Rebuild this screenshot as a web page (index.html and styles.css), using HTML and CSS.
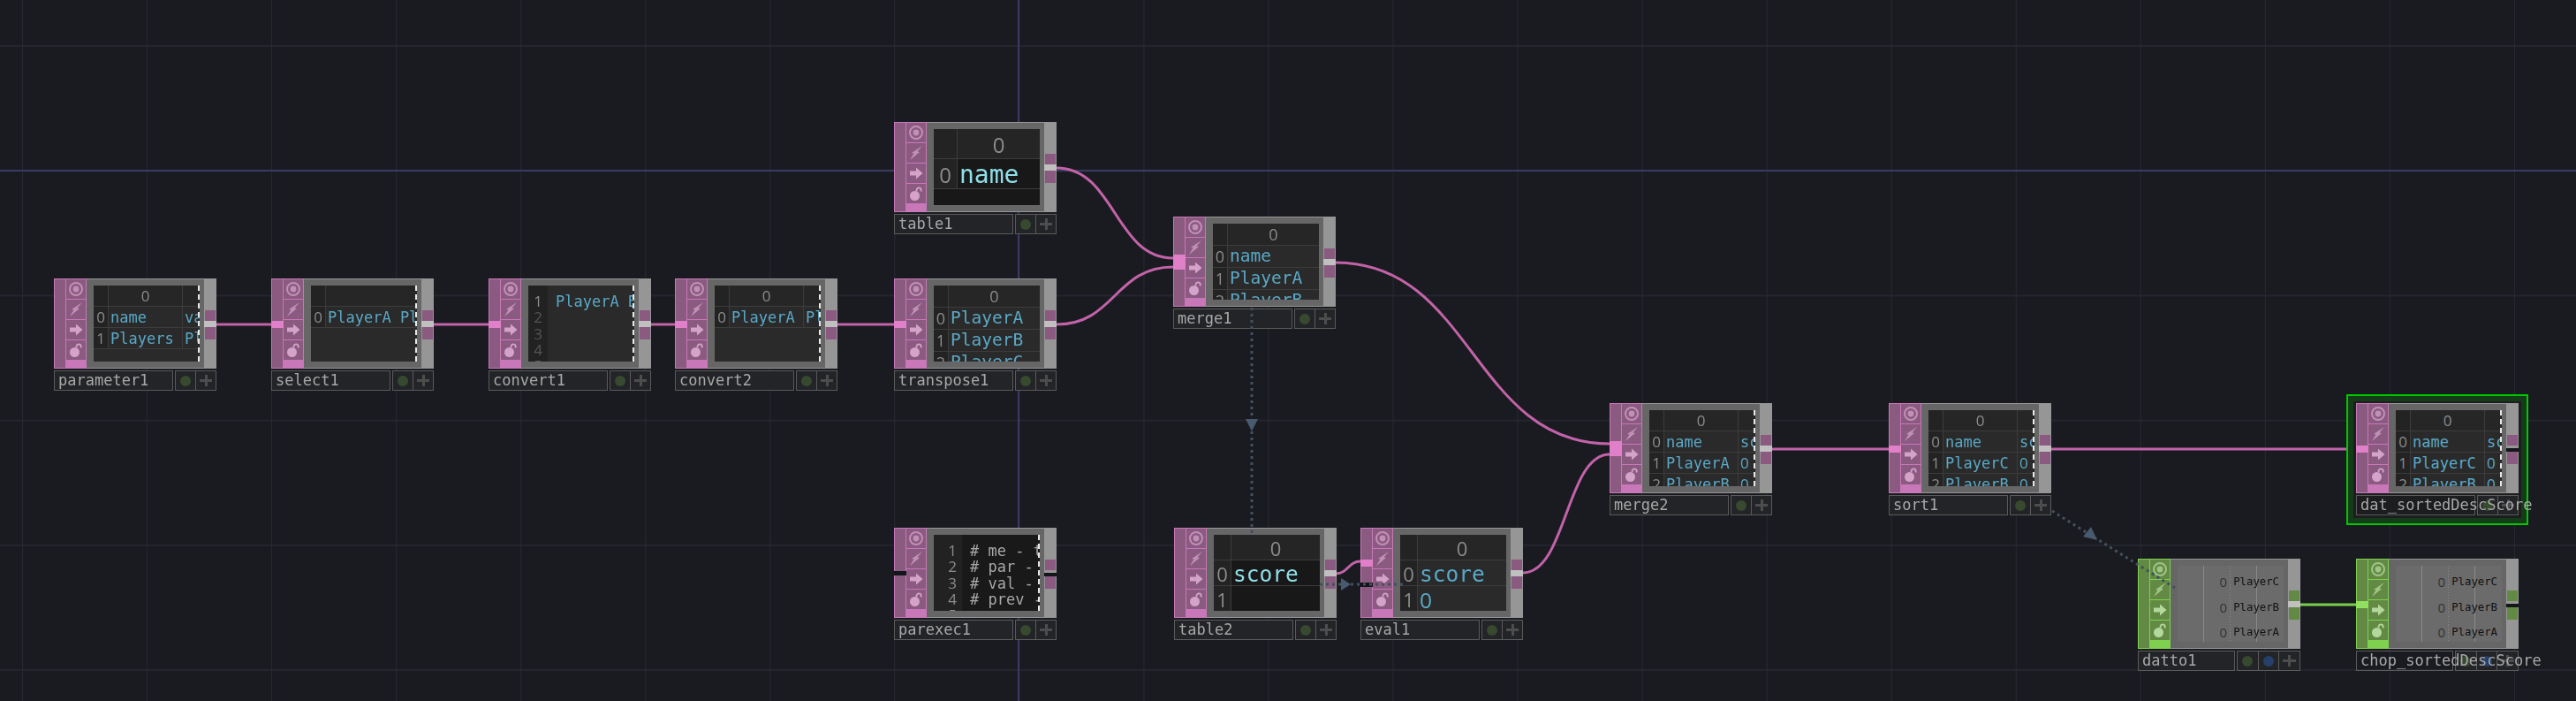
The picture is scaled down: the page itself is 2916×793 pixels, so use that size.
FILE: index.html
```html
<!DOCTYPE html>
<html lang="en">
<head>
<meta charset="UTF-8">
<meta name="viewport" content="width=device-width, initial-scale=1.0">
<link rel="stylesheet" href="styles.css">
<title>Network editor</title>
</head>

<body>

<svg class="defs" width="0" height="0">
  <symbol id="i-view" viewBox="0 0 16 16">
    <path fill-rule="evenodd" opacity="0.75" d="M8 0a8 8 0 1 1 0 16A8 8 0 0 1 8 0zm0 2a6 6 0 1 0 0 12A6 6 0 0 0 8 2z"/>
    <circle cx="8" cy="8" r="3.4" opacity="0.75"/>
  </symbol>
  <symbol id="i-bolt" viewBox="0 0 16 16">
    <path opacity="0.75" d="M15 0 9.5 6.5l2.5.5L1 16l4.500-7.500L3 8z"/>
  </symbol>
  <symbol id="i-arrow" viewBox="0 0 16 16">
    <path d="M8 1.5 15.5 8 8 14.500V10.500H1v-5h7z"/>
  </symbol>
  <symbol id="i-lock" viewBox="0 0 16 16">
    <circle cx="6.500" cy="10.500" r="5.500"/>
    <path fill="none" stroke="currentColor" stroke-width="1.800" d="M8.500 5.500V4a2.600 2.600 0 0 1 5.200 0v1.500"/>
  </symbol>
</svg>

<main class="canvas">

  <div class="axis axis-h"></div>
  <div class="axis axis-v"></div>

  <!-- wires go under the nodes -->
  <svg class="wires" width="2916" height="793">
    <g class="wire">
      <path d="M245 367H307"/>
      <path d="M491 367H553"/>
      <path d="M737 367H764"/>
      <path d="M948 367H1012"/>
      <path d="M1196 190C1262 190 1262 292 1328 292"/>
      <path d="M1196 367C1262 367 1262 302 1328 302"/>
      <path d="M1512 297C1667 297 1667 502 1822 502"/>
      <path d="M1724 648C1773 648 1773 514 1822 514"/>
      <path d="M1512 649C1526 649 1526 635 1540 635"/>
      <path d="M2006 508H2138"/>
      <path d="M2322 508H2667"/>
    </g>
    <g class="wire wire-chop">
      <path d="M2604 684H2667"/>
    </g>
  </svg>

  <div class="select-box"></div>

  <div class="node n-parameter1">
    <div class="op">
      <div class="inputs"></div>
      <div class="flags">
        <span class="flag"><svg><use href="#i-view"/></svg></span>
        <span class="flag"><svg><use href="#i-bolt"/></svg></span>
        <span class="flag"><svg><use href="#i-arrow"/></svg></span>
        <span class="flag"><svg><use href="#i-lock"/></svg></span>
      </div>
      <div class="body">
        <div class="viewer cut">
          <div class="tbl cols-3">
            <span class="idx"></span><span class="head">0</span><span class="head"></span>
            <span class="idx">0</span><span>name</span><span>value</span>
            <span class="idx">1</span><span>Players</span><span>PlayerA</span>
          </div>
        </div>
      </div>
      <div class="outs"><i></i><i></i></div>
    </div>
    <div class="foot"><span class="name">parameter1</span><span class="btns"><i class="dot"></i><i class="plus"></i></span></div>
  </div>

  <div class="node n-select1">
    <div class="op">
      <div class="inputs"><span class="in"></span></div>
      <div class="flags">
        <span class="flag"><svg><use href="#i-view"/></svg></span>
        <span class="flag"><svg><use href="#i-bolt"/></svg></span>
        <span class="flag"><svg><use href="#i-arrow"/></svg></span>
        <span class="flag"><svg><use href="#i-lock"/></svg></span>
      </div>
      <div class="body">
        <div class="viewer cut">
          <div class="tbl cols-2">
            <span class="idx"></span><span class="head"></span>
            <span class="idx">0</span><span>PlayerA PlayerB</span>
          </div>
        </div>
      </div>
      <div class="outs"><i></i><i></i></div>
    </div>
    <div class="foot"><span class="name">select1</span><span class="btns"><i class="dot"></i><i class="plus"></i></span></div>
  </div>

  <div class="node n-convert1">
    <div class="op">
      <div class="inputs"><span class="in"></span></div>
      <div class="flags">
        <span class="flag"><svg><use href="#i-view"/></svg></span>
        <span class="flag"><svg><use href="#i-bolt"/></svg></span>
        <span class="flag"><svg><use href="#i-arrow"/></svg></span>
        <span class="flag"><svg><use href="#i-lock"/></svg></span>
      </div>
      <div class="body">
        <div class="viewer cut">
          <div class="code">
            <div class="gutter gutter-thin"><span>1</span><span class="off">2</span><span class="off">3</span><span class="off">4</span><span class="off">5</span></div>
            <div class="lines blue"><span>PlayerA B</span></div>
          </div>
        </div>
      </div>
      <div class="outs"><i></i><i></i></div>
    </div>
    <div class="foot"><span class="name">convert1</span><span class="btns"><i class="dot"></i><i class="plus"></i></span></div>
  </div>

  <div class="node n-convert2">
    <div class="op">
      <div class="inputs"><span class="in"></span></div>
      <div class="flags">
        <span class="flag"><svg><use href="#i-view"/></svg></span>
        <span class="flag"><svg><use href="#i-bolt"/></svg></span>
        <span class="flag"><svg><use href="#i-arrow"/></svg></span>
        <span class="flag"><svg><use href="#i-lock"/></svg></span>
      </div>
      <div class="body">
        <div class="viewer cut">
          <div class="tbl cols-3">
            <span class="idx"></span><span class="head">0</span><span class="head"></span>
            <span class="idx">0</span><span>PlayerA</span><span>PlayerB</span>
          </div>
        </div>
      </div>
      <div class="outs"><i></i><i></i></div>
    </div>
    <div class="foot"><span class="name">convert2</span><span class="btns"><i class="dot"></i><i class="plus"></i></span></div>
  </div>

  <div class="node n-transpose1">
    <div class="op">
      <div class="inputs"><span class="in"></span></div>
      <div class="flags">
        <span class="flag"><svg><use href="#i-view"/></svg></span>
        <span class="flag"><svg><use href="#i-bolt"/></svg></span>
        <span class="flag"><svg><use href="#i-arrow"/></svg></span>
        <span class="flag"><svg><use href="#i-lock"/></svg></span>
      </div>
      <div class="body">
        <div class="viewer">
          <div class="tbl cols-2 tbl-mid">
            <span class="idx"></span><span class="head">0</span>
            <span class="idx">0</span><span>PlayerA</span>
            <span class="idx">1</span><span>PlayerB</span>
            <span class="idx">2</span><span>PlayerC</span>
          </div>
        </div>
      </div>
      <div class="outs"><i></i><i></i></div>
    </div>
    <div class="foot"><span class="name">transpose1</span><span class="btns"><i class="dot"></i><i class="plus"></i></span></div>
  </div>

  <div class="node n-table1">
    <div class="op">
      <div class="inputs"></div>
      <div class="flags">
        <span class="flag"><svg><use href="#i-view"/></svg></span>
        <span class="flag"><svg><use href="#i-bolt"/></svg></span>
        <span class="flag"><svg><use href="#i-arrow"/></svg></span>
        <span class="flag"><svg><use href="#i-lock"/></svg></span>
      </div>
      <div class="body">
        <div class="viewer viewer-edit">
          <div class="tbl cols-big tbl-edit">
            <span class="idx"></span><span class="head">0</span>
            <span class="idx">0</span><span>name</span>
          </div>
        </div>
      </div>
      <div class="outs"><i></i><i></i></div>
    </div>
    <div class="foot"><span class="name">table1</span><span class="btns"><i class="dot"></i><i class="plus"></i></span></div>
  </div>

  <div class="node n-merge1">
    <div class="op">
      <div class="inputs"><span class="in in-multi"></span></div>
      <div class="flags">
        <span class="flag"><svg><use href="#i-view"/></svg></span>
        <span class="flag"><svg><use href="#i-bolt"/></svg></span>
        <span class="flag"><svg><use href="#i-arrow"/></svg></span>
        <span class="flag"><svg><use href="#i-lock"/></svg></span>
      </div>
      <div class="body">
        <div class="viewer">
          <div class="tbl cols-2 tbl-mid">
            <span class="idx"></span><span class="head">0</span>
            <span class="idx">0</span><span>name</span>
            <span class="idx">1</span><span>PlayerA</span>
            <span class="idx">2</span><span>PlayerB</span>
          </div>
        </div>
      </div>
      <div class="outs"><i></i><i></i></div>
    </div>
    <div class="foot"><span class="name">merge1</span><span class="btns"><i class="dot"></i><i class="plus"></i></span></div>
  </div>

  <div class="node n-parexec1">
    <div class="op">
      <div class="inputs"><span class="in-gap"></span></div>
      <div class="flags">
        <span class="flag"><svg><use href="#i-view"/></svg></span>
        <span class="flag"><svg><use href="#i-bolt"/></svg></span>
        <span class="flag"><svg><use href="#i-arrow"/></svg></span>
        <span class="flag"><svg><use href="#i-lock"/></svg></span>
      </div>
      <div class="body">
        <div class="viewer viewer-black cut">
          <div class="code">
            <div class="gutter"><span>1</span><span>2</span><span>3</span><span>4</span><span>5</span></div>
            <div class="lines"><span># me - this DAT</span><span># par - the Par</span><span># val - the new</span><span># prev - the pr</span></div>
          </div>
        </div>
      </div>
      <div class="outs outs-notch"><i></i><i></i></div>
    </div>
    <div class="foot"><span class="name">parexec1</span><span class="btns"><i class="dot"></i><i class="plus"></i></span></div>
  </div>

  <div class="node n-table2">
    <div class="op">
      <div class="inputs"></div>
      <div class="flags">
        <span class="flag"><svg><use href="#i-view"/></svg></span>
        <span class="flag"><svg><use href="#i-bolt"/></svg></span>
        <span class="flag"><svg><use href="#i-arrow"/></svg></span>
        <span class="flag"><svg><use href="#i-lock"/></svg></span>
      </div>
      <div class="body">
        <div class="viewer viewer-edit">
          <div class="tbl cols-score tbl-score tbl-edit">
            <span class="idx"></span><span class="head">0</span>
            <span class="idx">0</span><span>score</span>
            <span class="idx">1</span><span></span>
          </div>
        </div>
      </div>
      <div class="outs"><i></i><i></i></div>
    </div>
    <div class="foot"><span class="name">table2</span><span class="btns"><i class="dot"></i><i class="plus"></i></span></div>
  </div>

  <div class="node n-eval1">
    <div class="op">
      <div class="inputs"><span class="in in-top"></span><span class="in-gap in-gap-low"></span></div>
      <div class="flags">
        <span class="flag"><svg><use href="#i-view"/></svg></span>
        <span class="flag"><svg><use href="#i-bolt"/></svg></span>
        <span class="flag"><svg><use href="#i-arrow"/></svg></span>
        <span class="flag"><svg><use href="#i-lock"/></svg></span>
      </div>
      <div class="body">
        <div class="viewer">
          <div class="tbl cols-score tbl-score">
            <span class="idx"></span><span class="head">0</span>
            <span class="idx">0</span><span>score</span>
            <span class="idx">1</span><span class="num">0</span>
          </div>
        </div>
      </div>
      <div class="outs"><i></i><i></i></div>
    </div>
    <div class="foot"><span class="name">eval1</span><span class="btns"><i class="dot"></i><i class="plus"></i></span></div>
  </div>

  <div class="node n-merge2">
    <div class="op">
      <div class="inputs"><span class="in in-multi"></span></div>
      <div class="flags">
        <span class="flag"><svg><use href="#i-view"/></svg></span>
        <span class="flag"><svg><use href="#i-bolt"/></svg></span>
        <span class="flag"><svg><use href="#i-arrow"/></svg></span>
        <span class="flag"><svg><use href="#i-lock"/></svg></span>
      </div>
      <div class="body">
        <div class="viewer cut">
          <div class="tbl cols-3">
            <span class="idx"></span><span class="head">0</span><span class="head"></span>
            <span class="idx">0</span><span>name</span><span>score</span>
            <span class="idx">1</span><span>PlayerA</span><span class="num">0</span>
            <span class="idx">2</span><span>PlayerB</span><span class="num">0</span>
          </div>
        </div>
      </div>
      <div class="outs"><i></i><i></i></div>
    </div>
    <div class="foot"><span class="name">merge2</span><span class="btns"><i class="dot"></i><i class="plus"></i></span></div>
  </div>

  <div class="node n-sort1">
    <div class="op">
      <div class="inputs"><span class="in"></span></div>
      <div class="flags">
        <span class="flag"><svg><use href="#i-view"/></svg></span>
        <span class="flag"><svg><use href="#i-bolt"/></svg></span>
        <span class="flag"><svg><use href="#i-arrow"/></svg></span>
        <span class="flag"><svg><use href="#i-lock"/></svg></span>
      </div>
      <div class="body">
        <div class="viewer cut">
          <div class="tbl cols-3">
            <span class="idx"></span><span class="head">0</span><span class="head"></span>
            <span class="idx">0</span><span>name</span><span>score</span>
            <span class="idx">1</span><span>PlayerC</span><span class="num">0</span>
            <span class="idx">2</span><span>PlayerB</span><span class="num">0</span>
          </div>
        </div>
      </div>
      <div class="outs"><i></i><i></i></div>
    </div>
    <div class="foot"><span class="name">sort1</span><span class="btns"><i class="dot"></i><i class="plus"></i></span></div>
  </div>

  <div class="node n-dat-sorted">
    <div class="op">
      <div class="inputs"><span class="in"></span></div>
      <div class="flags">
        <span class="flag"><svg><use href="#i-view"/></svg></span>
        <span class="flag"><svg><use href="#i-bolt"/></svg></span>
        <span class="flag"><svg><use href="#i-arrow"/></svg></span>
        <span class="flag"><svg><use href="#i-lock"/></svg></span>
      </div>
      <div class="body">
        <div class="viewer cut">
          <div class="tbl cols-3">
            <span class="idx"></span><span class="head">0</span><span class="head"></span>
            <span class="idx">0</span><span>name</span><span>score</span>
            <span class="idx">1</span><span>PlayerC</span><span class="num">0</span>
            <span class="idx">2</span><span>PlayerB</span><span class="num">0</span>
          </div>
        </div>
      </div>
      <div class="outs outs-notch"><i></i><i></i></div>
    </div>
    <div class="foot"><span class="name">dat_sortedDescScore</span><span class="btns"><i class="dot"></i><i class="plus"></i></span></div>
  </div>

  <div class="node chop n-datto1">
    <div class="op">
      <div class="inputs"></div>
      <div class="flags">
        <span class="flag"><svg><use href="#i-view"/></svg></span>
        <span class="flag"><svg><use href="#i-bolt"/></svg></span>
        <span class="flag"><svg><use href="#i-arrow"/></svg></span>
        <span class="flag"><svg><use href="#i-lock"/></svg></span>
      </div>
      <div class="body">
        <div class="viewer viewer-chop">
          <div class="chan"><b>0</b><span>PlayerC</span></div>
          <div class="chan"><b>0</b><span>PlayerB</span></div>
          <div class="chan"><b>0</b><span>PlayerA</span></div>
        </div>
      </div>
      <div class="outs"><i></i><i></i></div>
    </div>
    <div class="foot foot-3"><span class="name">datto1</span><span class="btns"><i class="dot"></i><i class="dot dot-blue"></i><i class="plus"></i></span></div>
  </div>

  <div class="node chop n-chop-sorted">
    <div class="op">
      <div class="inputs"><span class="in"></span></div>
      <div class="flags">
        <span class="flag"><svg><use href="#i-view"/></svg></span>
        <span class="flag"><svg><use href="#i-bolt"/></svg></span>
        <span class="flag"><svg><use href="#i-arrow"/></svg></span>
        <span class="flag"><svg><use href="#i-lock"/></svg></span>
      </div>
      <div class="body">
        <div class="viewer viewer-chop">
          <div class="chan"><b>0</b><span>PlayerC</span></div>
          <div class="chan"><b>0</b><span>PlayerB</span></div>
          <div class="chan"><b>0</b><span>PlayerA</span></div>
        </div>
      </div>
      <div class="outs outs-notch"><i></i><i></i></div>
    </div>
    <div class="foot foot-3"><span class="name">chop_sortedDescScore</span><span class="btns"><i class="dot"></i><i class="dot dot-blue"></i><i class="plus"></i></span></div>
  </div>

  <!-- dotted links sit on top of the nodes -->
  <svg class="links" width="2916" height="793">
    <path class="link" d="M1417 348V604"/>
    <path class="tip" d="M1410 474H1424L1417 488z"/>
    <path class="link" d="M1494 661H1590"/>
    <path class="tip" d="M1518 654V668L1529 661z"/>
    <path class="link" d="M2323 578L2462 665"/>
    <path class="tip" d="M2358 607L2367 596L2374 611z"/>
  </svg>

</main>

</body>
</html>
```

FILE: styles.css
```css
* {
  box-sizing: border-box;
}
html, body {
  margin: 0;
  height: 100%;
  overflow: hidden;
  background-color: #1a1b20;
}
.defs {
  position: absolute;
}

/* grid lines every 141px */
.canvas {
  position: relative;
  width: 2916px;
  height: 793px;
  background-color: #1a1b20;
  background-image:
    linear-gradient(to right, #272833 1px, transparent 1px),
    linear-gradient(to bottom, #24252e 2px, transparent 2px);
  background-size: 141.05px 100%, 100% 141.2px;
  background-position: 25px 0, 0 51px;
  font-family: "DejaVu Sans Mono", monospace;
}
.axis {
  position: absolute;
  background-color: #3b3a63;
}
.axis-h {
  left: 0;
  top: 192px;
  width: 100%;
  height: 2px;
}
.axis-v {
  left: 1152px;
  top: 0;
  width: 2px;
  height: 100%;
}

.wires, .links {
  position: absolute;
  left: 0;
  top: 0;
}
.wire path {
  fill: none;
  stroke: #c263a9;
  stroke-width: 3;
}
.wire-chop path {
  stroke: #78cf4c;
}
.link {
  fill: none;
  stroke: #43505e;
  stroke-width: 3;
  stroke-dasharray: 3 4;
}
.tip {
  fill: #475a6e;
}

.select-box {
  position: absolute;
  left: 2656px;
  top: 446px;
  width: 206px;
  height: 148px;
  background-color: #1c1d1f;
  border: 2px solid #00c800;
  box-shadow: inset 0 0 0 6px #153c18;
}

/* node places on the network */
.node {
  position: absolute;
  width: 184px;
  --fill: #8a5a80;
  --edge: #c878b8;
  --hot: #e080c8;
  --glyph: #d4a2ca;
  filter: blur(0.4px);
}
.chop {
  --fill: #628a44;
  --edge: #80d050;
  --hot: #92e060;
  --glyph: #b4d89c;
}
.n-parameter1 { left: 61px; top: 315px; }
.n-select1 { left: 307px; top: 315px; }
.n-convert1 { left: 553px; top: 315px; }
.n-convert2 { left: 764px; top: 315px; }
.n-transpose1 { left: 1012px; top: 315px; }
.n-table1 { left: 1012px; top: 138px; }
.n-merge1 { left: 1328px; top: 245px; }
.n-parexec1 { left: 1012px; top: 597px; }
.n-table2 { left: 1329px; top: 597px; }
.n-eval1 { left: 1540px; top: 597px; }
.n-merge2 { left: 1822px; top: 456px; }
.n-sort1 { left: 2138px; top: 456px; }
.n-dat-sorted { left: 2667px; top: 456px; }
.n-datto1 { left: 2420px; top: 632px; }
.n-chop-sorted { left: 2667px; top: 632px; }

.op {
  display: flex;
  height: 102px;
  background-color: #969696;
}
.inputs {
  position: relative;
  flex: none;
  width: 14px;
  background-color: var(--fill);
  border: 1px solid var(--edge);
}
.in {
  position: absolute;
  left: -1px;
  right: -1px;
  top: 47px;
  height: 8px;
  background-color: var(--hot);
}
.in-multi {
  top: 42px;
  height: 17px;
}
.in-top {
  top: 35px;
  height: 8px;
}
.in-gap {
  position: absolute;
  left: -1px;
  right: -1px;
  top: 48px;
  height: 5px;
  background-color: #14151a;
}
.in-gap-low {
  top: 61px;
}
.flags {
  display: flex;
  flex: none;
  flex-direction: column;
  gap: 1px;
  width: 23px;
  height: 102px;
  overflow: hidden;
  background-color: var(--edge);
  border-top: 1px solid var(--edge);
  border-right: 1px solid var(--edge);
}
.flag {
  display: flex;
  flex: none;
  align-items: center;
  justify-content: center;
  height: 22px;
  background-color: var(--fill);
  color: var(--glyph);
}
.flag svg {
  width: 16px;
  height: 16px;
  fill: currentColor;
}

.body {
  display: flex;
  flex: 1;
  min-width: 0;
  padding: 7px 5px 7px 8px;
  background-color: #666666;
  border-top: 1px solid #969696;
  border-bottom: 1px solid #969696;
}
.viewer {
  position: relative;
  flex: 1;
  min-width: 0;
  overflow: hidden;
  background-color: #2a2a2a;
  color: #5aa8c6;
}
.viewer-edit {
  background-color: #181818;
}
.viewer-black {
  background-color: #191919;
}
.cut::after {
  content: "";
  position: absolute;
  right: 0;
  top: 0;
  bottom: 0;
  border-right: 2px dashed #e8e8e8;
}

/* table views */
.tbl {
  display: grid;
  grid-auto-rows: 23px;
  gap: 1px;
  padding-bottom: 1px;
  background-color: #3c3c3c;
  font-size: 17px;
  line-height: 24px;
}
.cols-3 {
  grid-template-columns: 16px 83px 1fr;
}
.cols-2 {
  grid-template-columns: 16px 1fr;
}
.cols-big {
  grid-template-columns: 26px 1fr;
}
.cols-score {
  grid-template-columns: 19px 1fr;
}
.tbl > span {
  overflow: hidden;
  padding-left: 2px;
  background-color: #2a2a2a;
  white-space: nowrap;
}
.tbl > .idx {
  padding-left: 0;
  background-color: #232323;
  color: #8c8c8c;
  font-family: "Open Sans", sans-serif;
  font-size: 17px;
  text-align: center;
}
.tbl > .head {
  padding-left: 0;
  background-color: #262626;
  color: #8c8c8c;
  font-family: "Open Sans", sans-serif;
  font-size: 17px;
  text-align: center;
}
.num {
  font-family: "Open Sans", sans-serif;
}
.tbl-mid {
  grid-auto-rows: 24px;
  font-size: 19.500px;
  line-height: 24px;
}
.tbl-mid > .head, .tbl-mid > .idx {
  font-size: 18px;
}
.tbl-score {
  grid-auto-rows: 28px;
  font-size: 24.500px;
  line-height: 31px;
}
.tbl-score > .idx, .tbl-score > .head {
  font-size: 22px;
}
.tbl-edit > span {
  background-color: #181818;
  color: #8fdfe8;
}
.tbl-edit > .head {
  background-color: #252525;
}
.cols-big {
  grid-auto-rows: 33px;
  font-size: 28px;
  line-height: 35px;
}
.cols-big > .idx, .cols-big > .head {
  font-size: 24px;
}

/* text views with line numbers */
.code {
  display: flex;
  height: 100%;
  font-size: 17px;
  line-height: 18.300px;
}
.gutter {
  display: flex;
  flex-direction: column;
  flex: none;
  width: 32px;
  padding: 9px 6px 0 0;
  background-color: #222222;
  color: #8c8c8c;
  font-family: "Open Sans", sans-serif;
  font-size: 17px;
  text-align: right;
}
.gutter-thin {
  width: 22px;
}
.gutter .off {
  color: #555555;
}
.lines {
  display: flex;
  flex-direction: column;
  min-width: 0;
  overflow: hidden;
  padding: 9px 0 0 9px;
  color: #a8a8a8;
  white-space: nowrap;
}
.blue {
  color: #5aa8c6;
}

/* channel views */
.viewer-chop {
  display: flex;
  flex-direction: column;
  justify-content: space-between;
  padding: 8px 5px 1px 0;
  background-color: #6b6b6b;
  background-image:
    linear-gradient(#8a8a8a, #8a8a8a),
    linear-gradient(#8a8a8a 50%, transparent 50%),
    linear-gradient(#8a8a8a, #8a8a8a);
  background-size: 1px 100%, 1px 3px, 1px 100%;
  background-position: 29px 0, 59px 0, 89px 0;
  background-repeat: no-repeat, repeat-y, no-repeat;
  color: #111111;
}
.chan {
  display: flex;
  justify-content: flex-end;
  align-items: center;
  gap: 7px;
  height: 20px;
  font-size: 12.300px;
  white-space: nowrap;
}
.chan b {
  color: #333333;
  font-family: "Open Sans", sans-serif;
  font-size: 15px;
  font-weight: normal;
}

.outs {
  position: relative;
  display: flex;
  flex: none;
  flex-direction: column;
  gap: 7px;
  width: 14px;
  padding: 36px 0 0 1px;
}
.outs::before {
  content: "";
  position: absolute;
  left: 0;
  right: 0;
  top: 48px;
  height: 7px;
  background-color: #c0c0c0;
}
.outs-notch::before {
  top: 51px;
  height: 4px;
  background-color: #15161a;
}
.outs i {
  position: relative;
  display: block;
  width: 12px;
  height: 12px;
  background-color: var(--fill);
}
.outs i:last-child {
  height: 14px;
}

/* name bar under the node */
.foot {
  display: flex;
  gap: 2px;
  height: 23px;
  margin-top: 2px;
}
.name {
  flex: none;
  width: 135px;
  padding-left: 4px;
  border: 1px solid #5a5a5a;
  background-color: #232427;
  color: #a8a8a8;
  font-size: 17px;
  line-height: 21px;
  white-space: nowrap;
}
.btns {
  display: flex;
  flex: 1;
}
.btns i {
  position: relative;
  flex: 1;
  border: 1px solid #5a5a5a;
  background-color: #232427;
}
.btns i + i {
  border-left: 0;
}
.dot::after {
  content: "";
  position: absolute;
  left: 50%;
  top: 50%;
  width: 12px;
  height: 12px;
  margin: -6px 0 0 -6px;
  border-radius: 50%;
  background-color: #37492f;
}
.dot-blue::after {
  background-color: #26406b;
}
.plus::before, .plus::after {
  content: "";
  position: absolute;
  background-color: #4d4d4d;
}
.plus::before {
  left: 50%;
  top: 4px;
  bottom: 4px;
  width: 3px;
  margin-left: -1.500px;
}
.plus::after {
  top: 50%;
  left: 4px;
  right: 4px;
  height: 3px;
  margin-top: -1.500px;
}
.foot-3 .name {
  width: 110px;
}
.n-chop-sorted .name, .n-dat-sorted .name {
  position: relative;
  z-index: 1;
  background-color: transparent;
}
```
